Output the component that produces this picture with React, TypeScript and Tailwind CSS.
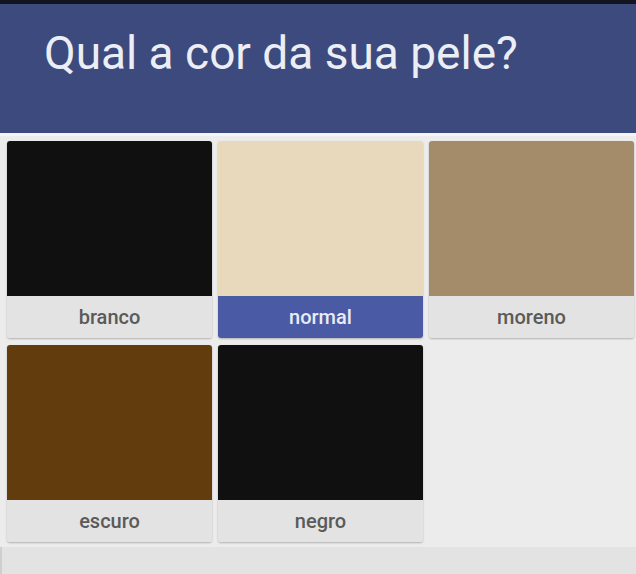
const options = [
  { label: "branco", color: "bg-[#101010]", selected: false },
  { label: "normal", color: "bg-[#e9d9bc]", selected: true },
  { label: "moreno", color: "bg-[#a48b69]", selected: false },
  { label: "escuro", color: "bg-[#623c0c]", selected: false },
  { label: "negro", color: "bg-[#101010]", selected: false },
];

export default function App() {
  return (
    <div className="w-[636px] h-[574px] overflow-hidden bg-[#ececec] font-['Roboto',sans-serif] flex flex-col">
      <div className="h-[4px] bg-[#12151f] shrink-0" />
      <header className="h-[132px] bg-[#3d4a7e] shrink-0 pl-[44px] pt-[22px] border-b-[3px] border-[#f4f4f7]">
        <h1 className="text-[46px] leading-[54px] text-[#eceef5] font-normal">
          Qual a cor da sua pele?
        </h1>
      </header>
      <div className="grid grid-cols-[205px_205px_205px] gap-x-[6px] gap-y-[7px] pl-[7px] pt-[5px]">
        {options.map((o) => (
          <div
            key={o.label}
            className="h-[197px] flex flex-col rounded-[3px] overflow-hidden shadow-[0_1px_2px_rgba(0,0,0,0.25)]"
          >
            <div className={`h-[155px] ${o.color}`} />
            <div
              className={
                "flex-1 flex items-center justify-center text-[20px] font-medium " +
                (o.selected
                  ? "bg-[#4a5aa4] text-[#e9ebf6]"
                  : "bg-[#e3e3e3] text-[#5a5a5a]")
              }
            >
              {o.label}
            </div>
          </div>
        ))}
      </div>
      <div className="mt-[5px] flex-1 bg-[#e3e3e3] border-l-[2px] border-[#cfcfcf]" />
    </div>
  );
}
